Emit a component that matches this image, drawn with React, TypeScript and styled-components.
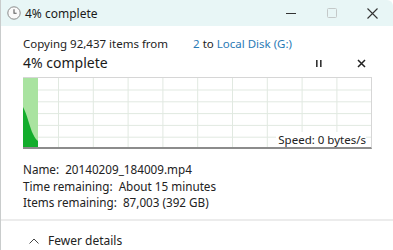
import React from 'react';
import styled, { createGlobalStyle } from 'styled-components';

const GlobalStyle = createGlobalStyle`
  html, body {
    margin: 0;
    padding: 0;
    background: #ffffff;
  }
  body {
    font-family: "Noto Sans", "Open Sans", sans-serif;
    color: #1b1b1b;
  }
`;

const details = [
  { label: 'Name:', value: '20140209_184009.mp4' },
  { label: 'Time remaining:', value: 'About 15 minutes' },
  { label: 'Items remaining:', value: '87,003 (392 GB)' },
];

const App: React.FC = () => {
  return (
    <>
      <GlobalStyle />
      <Window>
        <TitleBar>
          <TitleLeft>
            <svg width="14" height="14" viewBox="0 0 14 14">
              <circle cx="7" cy="7" r="6.2" fill="#fafafa" stroke="#8a8a8a" strokeWidth="1" />
              <path d="M7 3.2 V7.3 H9.6" fill="none" stroke="#5a5a5a" strokeWidth="1.1" />
            </svg>
            <TitleText>4% complete</TitleText>
          </TitleLeft>
          <Controls>
            <ControlButton>
              <svg width="10" height="10" viewBox="0 0 10 10">
                <path d="M0 5.5 H10" stroke="#333" strokeWidth="1" />
              </svg>
            </ControlButton>
            <ControlButton>
              <svg width="10" height="10" viewBox="0 0 10 10">
                <rect x="0.5" y="0.5" width="9" height="9" rx="1" fill="none" stroke="#c4c9c9" strokeWidth="1" />
              </svg>
            </ControlButton>
            <ControlButton>
              <svg width="11" height="11" viewBox="0 0 11 11">
                <path d="M0.5 0.5 L10.5 10.5 M10.5 0.5 L0.5 10.5" stroke="#333" strokeWidth="1.1" />
              </svg>
            </ControlButton>
          </Controls>
        </TitleBar>

        <Body>
          <CopyLine>
            Copying 92,437 items from <Gap /><Link>2</Link> to <Link>Local Disk (G:)</Link>
          </CopyLine>
          <HeadingRow>
            <Heading>4% complete</Heading>
            <Actions>
              <ActionButton>
                <svg width="8" height="9" viewBox="0 0 8 9">
                  <rect x="1" y="1" width="1.6" height="7" fill="#333" />
                  <rect x="5" y="1" width="1.6" height="7" fill="#333" />
                </svg>
              </ActionButton>
              <ActionButton>
                <svg width="9" height="9" viewBox="0 0 9 9">
                  <path d="M1 1 L8 8 M8 1 L1 8" stroke="#222" strokeWidth="1.5" />
                </svg>
              </ActionButton>
            </Actions>
          </HeadingRow>

          <Graph>
            <svg width="348" height="69" viewBox="0 0 348 69">
              {Array.from({ length: 9 }).map((_, i) => (
                <line key={'v' + i} x1={35.5 + i * 34.8} y1="0" x2={35.5 + i * 34.8} y2="69" stroke="#e1e9e1" strokeWidth="1" />
              ))}
              {Array.from({ length: 5 }).map((_, i) => (
                <line key={'h' + i} x1="0" y1={12 + i * 11.8} x2="348" y2={12 + i * 11.8} stroke="#e1e9e1" strokeWidth="1" />
              ))}
              <rect x="0" y="0" width="15" height="69" fill="#a9e3a0" />
              <path d="M0 29 C4 36 7 50 10 56 C12 60 13.5 62 15 63 L15 69 L0 69 Z" fill="#13ad2c" />
            </svg>
            <Speed>Speed: 0 bytes/s</Speed>
          </Graph>

          <Details>
            {details.map((d) => (
              <DetailRow key={d.label}>
                {d.label}&nbsp; {d.value}
              </DetailRow>
            ))}
          </Details>
        </Body>

        <Footer>
          <svg width="10" height="6" viewBox="0 0 10 6">
            <path d="M0.5 5.5 L5 1 L9.5 5.5" fill="none" stroke="#444" strokeWidth="1" />
          </svg>
          <FooterText>Fewer details</FooterText>
        </Footer>
      </Window>
    </>
  );
};

const Window = styled.div`
  width: 393px;
  height: 250px;
  box-sizing: border-box;
  border-left: 1px solid #c9cccc;
  display: flex;
  flex-direction: column;
  overflow: hidden;
  background: #ffffff;
`;

const TitleBar = styled.div`
  height: 26px;
  flex-shrink: 0;
  background: #e8f6f6;
  border-top-right-radius: 6px;
  display: flex;
  align-items: center;
  justify-content: space-between;
  padding-left: 6px;
`;

const TitleLeft = styled.div`
  display: flex;
  align-items: center;
  gap: 4px;
`;

const TitleText = styled.span`
  font-size: 12px;
  color: #1a1a1a;
`;

const Controls = styled.div`
  display: flex;
  align-items: center;
  height: 100%;
`;

const ControlButton = styled.div`
  width: 41px;
  height: 100%;
  display: flex;
  align-items: center;
  justify-content: center;
`;

const Body = styled.div`
  padding: 10px 21px 0 22px;
  display: flex;
  flex-direction: column;
  flex-shrink: 0;
`;

const CopyLine = styled.div`
  font-size: 11.5px;
  line-height: 16px;
  color: #222;
  white-space: nowrap;
`;

const Gap = styled.span`
  display: inline-block;
  width: 22px;
`;

const Link = styled.span`
  color: #2a7ab5;
`;

const HeadingRow = styled.div`
  display: flex;
  align-items: center;
  justify-content: space-between;
  height: 20px;
`;

const Heading = styled.div`
  font-size: 14px;
  color: #1a1a1a;
`;

const Actions = styled.div`
  display: flex;
  align-items: center;
  gap: 26px;
  padding-right: 3px;
  margin-top: 2px;
`;

const ActionButton = styled.div`
  width: 16px;
  height: 16px;
  display: flex;
  align-items: center;
  justify-content: center;
`;

const Graph = styled.div`
  position: relative;
  margin-top: 5px;
  width: 348px;
  height: 69px;
  border-top: 1px solid #d6d6d6;
  border-right: 1px solid #d6d6d6;
  border-bottom: 2px solid #8c8c8c;
  display: flex;
`;

const Speed = styled.div`
  position: absolute;
  right: 5px;
  bottom: 0;
  font-size: 11.5px;
  color: #222;
  background: #ffffff;
  padding-left: 2px;
`;

const Details = styled.div`
  margin-top: 12px;
  display: flex;
  flex-direction: column;
`;

const DetailRow = styled.div`
  font-size: 11.7px;
  line-height: 16.5px;
  color: #222;
  white-space: nowrap;
`;

const Footer = styled.div`
  margin-top: 8px;
  height: 40px;
  flex-shrink: 0;
  border-top: 2px solid #ececec;
  display: flex;
  align-items: center;
  gap: 9px;
  padding-left: 28px;
`;

const FooterText = styled.span`
  font-size: 12px;
  color: #222;
`;

export default App;
